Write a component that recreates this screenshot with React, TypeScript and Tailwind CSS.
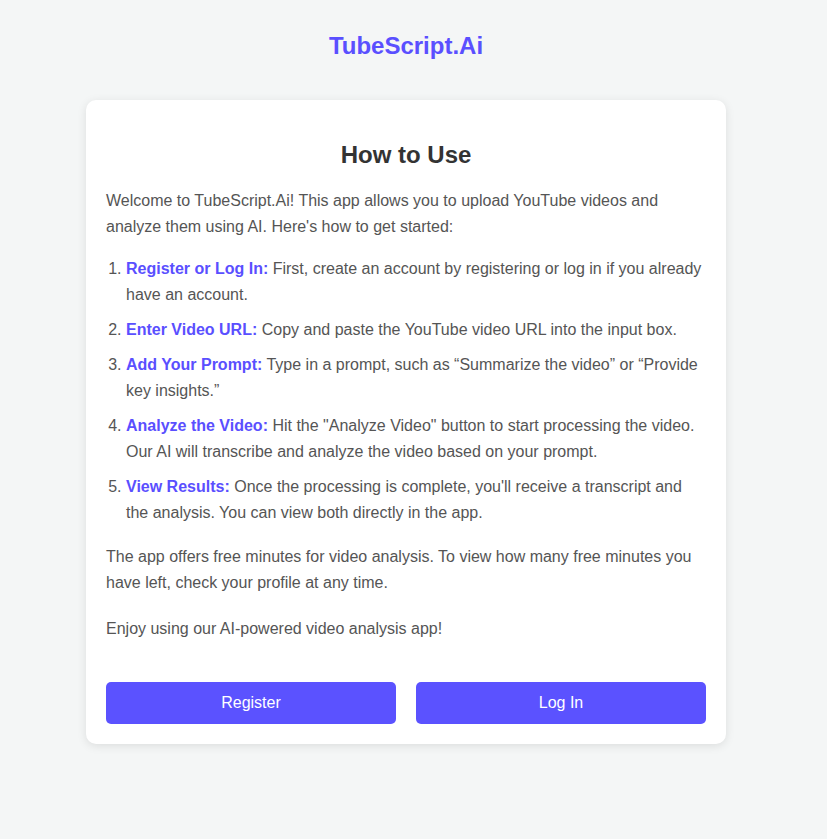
import React from 'react';

const steps = [
  {
    label: 'Register or Log In:',
    text: ' First, create an account by registering or log in if you already have an account.',
  },
  {
    label: 'Enter Video URL:',
    text: ' Copy and paste the YouTube video URL into the input box.',
  },
  {
    label: 'Add Your Prompt:',
    text: ' Type in a prompt, such as \u201cSummarize the video\u201d or \u201cProvide key insights.\u201d',
  },
  {
    label: 'Analyze the Video:',
    text: ' Hit the "Analyze Video" button to start processing the video. Our AI will transcribe and analyze the video based on your prompt.',
  },
  {
    label: 'View Results:',
    text: " Once the processing is complete, you'll receive a transcript and the analysis. You can view both directly in the app.",
  },
];

export default function App() {
  return (
    <div className="min-h-screen bg-[#f4f6f6] font-['Liberation_Sans',Arial,sans-serif]">
      <div className="w-[812px] pt-[31px] pb-10">
        <header className="text-center mb-[40px]">
          <h1 className="text-[24px] leading-[29px] font-bold text-[#5a4fff]">TubeScript.Ai</h1>
        </header>

        {/* How to use card */}
        <div className="mx-auto w-[640px] bg-white rounded-[10px] shadow-[0_2px_10px_rgba(0,0,0,0.1)] p-5">
          <h2 className="mt-5 mb-[19px] text-center text-[24px] leading-[29px] font-bold text-[#333333]">
            How to Use
          </h2>
          <p className="text-[16px] leading-[26px] text-[#555555] mb-4">
            Welcome to TubeScript.Ai! This app allows you to upload YouTube videos and analyze them using AI. Here's how to get started:
          </p>
          <ol className="list-decimal pl-5 text-[16px] leading-[26px] text-[#555555] mb-[18px]">
            {steps.map((step) => (
              <li key={step.label} className="mb-[9px] last:mb-0">
                <strong className="font-bold text-[#5a4fff]">{step.label}</strong>
                {step.text}
              </li>
            ))}
          </ol>
          <p className="text-[16px] leading-[26px] text-[#555555] mb-5">
            The app offers free minutes for video analysis. To view how many free minutes you have left, check your profile at any time.
          </p>
          <p className="text-[16px] leading-[26px] text-[#555555]">
            Enjoy using our AI-powered video analysis app!
          </p>

          <div className="mt-[40px] flex gap-5">
            <button className="flex-1 h-[42px] rounded-[5px] bg-[#5b52ff] text-white text-[16px]">
              Register
            </button>
            <button className="flex-1 h-[42px] rounded-[5px] bg-[#5b52ff] text-white text-[16px]">
              Log In
            </button>
          </div>
        </div>
      </div>
    </div>
  );
}
